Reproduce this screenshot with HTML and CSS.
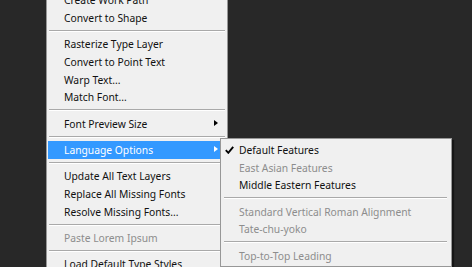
FILE: index.html
```html
<!DOCTYPE html>
<html lang="en">
  <head>
    <meta charset="UTF-8" />
    <title>Type Menu</title>
    <link rel="stylesheet" href="styles.css">
  </head>
  <body>
    <ul class="menu">
      <li class="item">Create Work Path</li>
      <li class="item">Convert to Shape</li>
      <li class="sep"></li>
      <li class="item">Rasterize Type Layer</li>
      <li class="item">Convert to Point Text</li>
      <li class="item">Warp Text...</li>
      <li class="item">Match Font...</li>
      <li class="sep"></li>
      <li class="item has-sub">Font Preview Size<span class="arrow"></span></li>
      <li class="sep"></li>
      <li class="item has-sub active">Language Options<span class="arrow"></span>
        <ul class="menu submenu">
          <li class="item checked">
            <svg class="check" width="9" height="8" viewBox="0 0 9 8">
              <path d="M0.8 4.2 L3.3 6.8 L8.2 0.8" fill="none" stroke="#000" stroke-width="1.9" />
            </svg>Default Features</li>
          <li class="item disabled">East Asian Features</li>
          <li class="item">Middle Eastern Features</li>
          <li class="sep"></li>
          <li class="item disabled">Standard Vertical Roman Alignment</li>
          <li class="item disabled">Tate-chu-yoko</li>
          <li class="sep"></li>
          <li class="item disabled">Top-to-Top Leading</li>
        </ul>
      </li>
      <li class="sep"></li>
      <li class="item">Update All Text Layers</li>
      <li class="item">Replace All Missing Fonts</li>
      <li class="item">Resolve Missing Fonts...</li>
      <li class="sep"></li>
      <li class="item disabled">Paste Lorem Ipsum</li>
      <li class="sep"></li>
      <li class="item">Load Default Type Styles</li>
    </ul>
  </body>
</html>
```
FILE: styles.css
```css
html,
body {
  margin: 0;
  padding: 0;
  height: 100%;
  overflow: hidden;
  background: #282828;
  font-family: "Noto Sans", "Open Sans", sans-serif;
  font-size: 10.3px;
}
.menu {
  list-style: none;
  margin: -11.6px 0 0 46px;
  padding: 2px 1px;
  width: 178px;
  background: #f0f0f0;
  border: 1px solid #979797;
  color: #111;
}
.item {
  position: relative;
  height: 17.6px;
  padding: 1px 0 0 16px;
  box-sizing: border-box;
  line-height: 16.6px;
  white-space: nowrap;
}
.item.disabled {
  color: #8d8d8d;
}
.item.active {
  background: #3399ff;
  color: #fff;
}
.sep {
  height: 0;
  margin: 3.5px 1px 3.3px 1px;
  border-top: 1px solid #a9a9a9;
  border-bottom: 1px solid #fff;
}
.arrow {
  position: absolute;
  right: 8px;
  top: 5px;
  width: 0;
  height: 0;
  border-left: 4px solid #000;
  border-top: 3.5px solid transparent;
  border-bottom: 3.5px solid transparent;
}
.active .arrow {
  border-left-color: #fff;
}
.submenu {
  position: absolute;
  left: 172px;
  top: -3px;
  margin: 0;
  width: 228px;
  color: #111;
  box-shadow: 2px 2px 1px rgba(0, 0, 0, 0.45);
}
.submenu .item {
  padding-left: 17px;
}
.submenu .item.disabled {
  color: #8d8d8d;
}
.submenu .sep {
  margin-left: 2px;
  margin-right: 3px;
}
.check {
  position: absolute;
  left: 3px;
  top: 5px;
}
```
